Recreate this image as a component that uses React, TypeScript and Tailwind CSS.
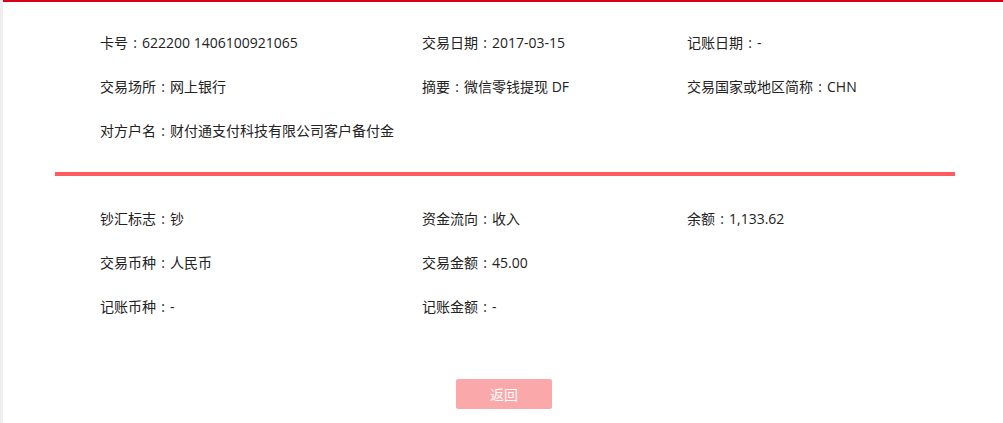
const top = [
  [['卡号', '622200 1406100921065'], ['交易日期', '2017-03-15'], ['记账日期', '-']],
  [['交易场所', '网上银行'], ['摘要', '微信零钱提现 DF'], ['交易国家或地区简称', 'CHN']],
  [['对方户名', '财付通支付科技有限公司客户备付金']],
];

const bottom = [
  [['钞汇标志', '钞'], ['资金流向', '收入'], ['余额', '1,133.62']],
  [['交易币种', '人民币'], ['交易金额', '45.00']],
  [['记账币种', '-'], ['记账金额', '-']],
];

function InfoRows({ rows }: { rows: string[][][] }) {
  return (
    <div className="pl-[97px]">
      {rows.map((row, i) => (
        <div key={i} className="grid grid-cols-[322px_265px_1fr] h-[44px] items-center">
          {row.map(([label, value], j) => (
            <span key={j} className="whitespace-nowrap">
              {label}
              <span className="inline-block w-[14px] text-center">:</span>
              {value}
            </span>
          ))}
        </div>
      ))}
    </div>
  );
}

export default function App() {
  return (
    <div
      className="flex w-[1003px] h-[423px] bg-white text-[14px] text-[#222]"
      style={{ fontFamily: '"Open Sans", "Noto Sans CJK SC", sans-serif' }}
    >
      <div className="w-[3px] bg-[#eeeeee]" />
      <div className="flex-1 flex flex-col">
        <div className="h-[2px] bg-[#d9001b]" />
        <div className="pt-[18px]">
          <InfoRows rows={top} />
        </div>
        <div className="mt-[20px] ml-[52px] w-[900px] h-[4px] bg-[#ff5a5f]" />
        <div className="pt-[20px]">
          <InfoRows rows={bottom} />
        </div>
        <div className="flex justify-center mt-[51px] pl-[2px]">
          <button
            type="button"
            className="w-[96px] h-[30px] rounded-[2px] bg-[#fba8aa] text-white text-[14px]"
          >
            返回
          </button>
        </div>
      </div>
    </div>
  );
}
